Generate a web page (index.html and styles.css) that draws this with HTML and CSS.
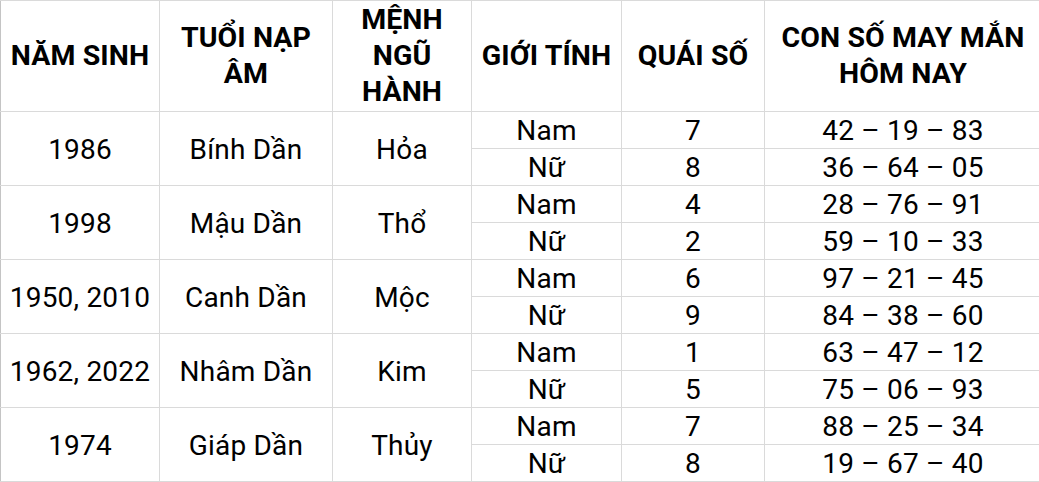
FILE: index.html
```html
<!DOCTYPE html>
<html lang="vi">
<head>
<meta charset="utf-8">
<title>Con số may mắn</title>
<link rel="stylesheet" href="styles.css">
</head>
<body>
<table class="luck">
  <colgroup>
    <col class="c1"><col class="c2"><col class="c3"><col class="c4"><col class="c5"><col class="c6">
  </colgroup>
  <thead>
    <tr class="head">
      <th>NĂM SINH</th>
      <th>TUỔI NẠP ÂM</th>
      <th>MỆNH NGŨ HÀNH</th>
      <th>GIỚI TÍNH</th>
      <th>QUÁI SỐ</th>
      <th>CON SỐ MAY MẮN HÔM NAY</th>
    </tr>
  </thead>
  <tbody>
    <tr><td rowspan="2">1986</td><td rowspan="2">Bính Dần</td><td rowspan="2">Hỏa</td><td>Nam</td><td>7</td><td>42 – 19 – 83</td></tr>
    <tr><td>Nữ</td><td>8</td><td>36 – 64 – 05</td></tr>
    <tr><td rowspan="2">1998</td><td rowspan="2">Mậu Dần</td><td rowspan="2">Thổ</td><td>Nam</td><td>4</td><td>28 – 76 – 91</td></tr>
    <tr><td>Nữ</td><td>2</td><td>59 – 10 – 33</td></tr>
    <tr><td rowspan="2">1950, 2010</td><td rowspan="2">Canh Dần</td><td rowspan="2">Mộc</td><td>Nam</td><td>6</td><td>97 – 21 – 45</td></tr>
    <tr><td>Nữ</td><td>9</td><td>84 – 38 – 60</td></tr>
    <tr><td rowspan="2">1962, 2022</td><td rowspan="2">Nhâm Dần</td><td rowspan="2">Kim</td><td>Nam</td><td>1</td><td>63 – 47 – 12</td></tr>
    <tr><td>Nữ</td><td>5</td><td>75 – 06 – 93</td></tr>
    <tr><td rowspan="2">1974</td><td rowspan="2">Giáp Dần</td><td rowspan="2">Thủy</td><td>Nam</td><td>7</td><td>88 – 25 – 34</td></tr>
    <tr><td>Nữ</td><td>8</td><td>19 – 67 – 40</td></tr>
  </tbody>
</table>
</body>
</html>
```

FILE: styles.css
```css
html, body {
  margin: 0;
  padding: 0;
  background: #ffffff;
}

.luck {
  border-collapse: collapse;
  table-layout: fixed;
  width: 1041px;
  font-family: Roboto, "Liberation Sans", sans-serif;
  color: #000000;
  border-left: 1px solid #c4c4c4;
}

.c1 { width: 159px; }
.c2 { width: 173px; }
.c3 { width: 139px; }
.c4 { width: 150px; }
.c5 { width: 143px; }
.c6 { width: 277px; }

.luck th,
.luck td {
  border: 1px solid #dadada;
  padding: 0 4px;
  text-align: center;
  vertical-align: middle;
  overflow: visible;
}

.luck th {
  font-weight: 700;
  font-size: 28.5px;
  line-height: 36px;
  letter-spacing: 0.1px;
}

.luck td {
  font-weight: 400;
  font-size: 28px;
  line-height: 34px;
  padding-top: 2px;
  letter-spacing: 0.2px;
}

.head {
  height: 111px;
}

.luck tbody tr {
  height: 37px;
}

.luck tr > :first-child {
  border-left-color: #c4c4c4;
}
```
